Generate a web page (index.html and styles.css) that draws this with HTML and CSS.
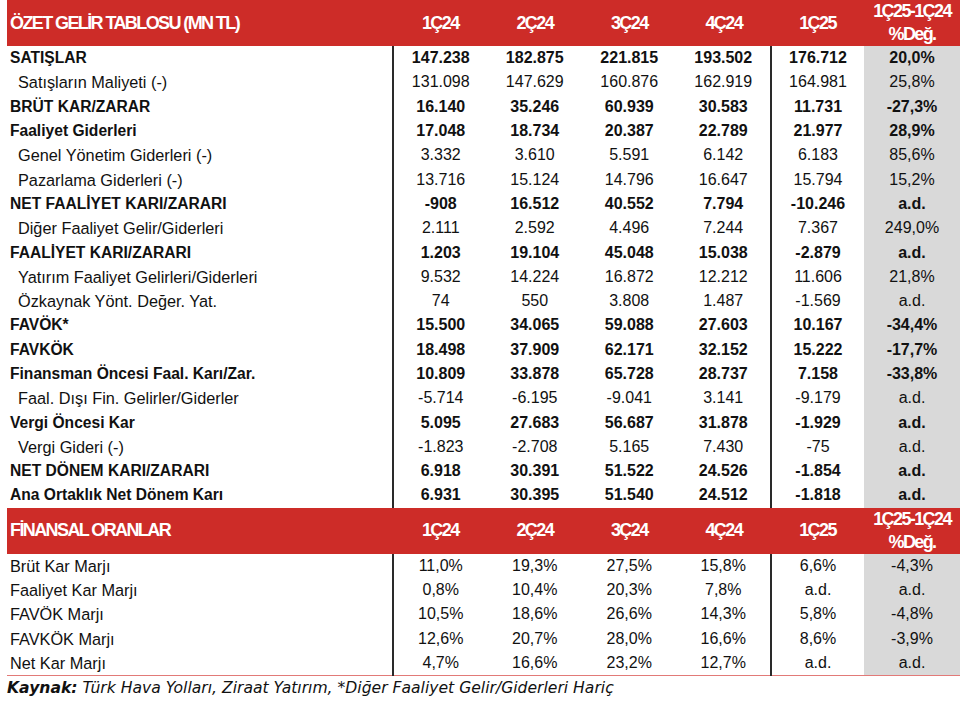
FILE: index.html
```html
<!DOCTYPE html>
<html lang="tr">
<head>
<meta charset="utf-8">
<title>Özet Gelir Tablosu</title>
<link rel="stylesheet" href="styles.css">
</head>
<body>
<div class="page">
<table class="fin">
<colgroup>
<col class="c-label"><col class="c-q"><col class="c-q"><col class="c-q"><col class="c-q"><col class="c-q5"><col class="c-chg">
</colgroup>
<tbody>
<tr class="head">
<th class="lbl">ÖZET GELİR TABLOSU (MN TL)</th><th>1Ç24</th><th>2Ç24</th><th>3Ç24</th><th>4Ç24</th><th>1Ç25</th><th class="two">1Ç25-1Ç24<br>%Değ.</th>
</tr>
<tr class="b"><td class="lbl">SATIŞLAR</td><td class="q1">147.238</td><td>182.875</td><td>221.815</td><td>193.502</td><td class="q5">176.712</td><td class="chg">20,0%</td></tr>
<tr><td class="lbl ind">Satışların Maliyeti (-)</td><td class="q1">131.098</td><td>147.629</td><td>160.876</td><td>162.919</td><td class="q5">164.981</td><td class="chg">25,8%</td></tr>
<tr class="b"><td class="lbl">BRÜT KAR/ZARAR</td><td class="q1">16.140</td><td>35.246</td><td>60.939</td><td>30.583</td><td class="q5">11.731</td><td class="chg">-27,3%</td></tr>
<tr class="b"><td class="lbl">Faaliyet Giderleri</td><td class="q1">17.048</td><td>18.734</td><td>20.387</td><td>22.789</td><td class="q5">21.977</td><td class="chg">28,9%</td></tr>
<tr><td class="lbl ind">Genel Yönetim Giderleri (-)</td><td class="q1">3.332</td><td>3.610</td><td>5.591</td><td>6.142</td><td class="q5">6.183</td><td class="chg">85,6%</td></tr>
<tr><td class="lbl ind">Pazarlama Giderleri (-)</td><td class="q1">13.716</td><td>15.124</td><td>14.796</td><td>16.647</td><td class="q5">15.794</td><td class="chg">15,2%</td></tr>
<tr class="b"><td class="lbl">NET FAALİYET KARI/ZARARI</td><td class="q1">-908</td><td>16.512</td><td>40.552</td><td>7.794</td><td class="q5">-10.246</td><td class="chg">a.d.</td></tr>
<tr><td class="lbl ind">Diğer Faaliyet Gelir/Giderleri</td><td class="q1">2.111</td><td>2.592</td><td>4.496</td><td>7.244</td><td class="q5">7.367</td><td class="chg">249,0%</td></tr>
<tr class="b"><td class="lbl">FAALİYET KARI/ZARARI</td><td class="q1">1.203</td><td>19.104</td><td>45.048</td><td>15.038</td><td class="q5">-2.879</td><td class="chg">a.d.</td></tr>
<tr><td class="lbl ind">Yatırım Faaliyet Gelirleri/Giderleri</td><td class="q1">9.532</td><td>14.224</td><td>16.872</td><td>12.212</td><td class="q5">11.606</td><td class="chg">21,8%</td></tr>
<tr><td class="lbl ind">Özkaynak Yönt. Değer. Yat.</td><td class="q1">74</td><td>550</td><td>3.808</td><td>1.487</td><td class="q5">-1.569</td><td class="chg">a.d.</td></tr>
<tr class="b"><td class="lbl">FAVÖK*</td><td class="q1">15.500</td><td>34.065</td><td>59.088</td><td>27.603</td><td class="q5">10.167</td><td class="chg">-34,4%</td></tr>
<tr class="b"><td class="lbl">FAVKÖK</td><td class="q1">18.498</td><td>37.909</td><td>62.171</td><td>32.152</td><td class="q5">15.222</td><td class="chg">-17,7%</td></tr>
<tr class="b"><td class="lbl">Finansman Öncesi Faal. Karı/Zar.</td><td class="q1">10.809</td><td>33.878</td><td>65.728</td><td>28.737</td><td class="q5">7.158</td><td class="chg">-33,8%</td></tr>
<tr><td class="lbl ind">Faal. Dışı Fin. Gelirler/Giderler</td><td class="q1">-5.714</td><td>-6.195</td><td>-9.041</td><td>3.141</td><td class="q5">-9.179</td><td class="chg">a.d.</td></tr>
<tr class="b"><td class="lbl">Vergi Öncesi Kar</td><td class="q1">5.095</td><td>27.683</td><td>56.687</td><td>31.878</td><td class="q5">-1.929</td><td class="chg">a.d.</td></tr>
<tr><td class="lbl ind">Vergi Gideri (-)</td><td class="q1">-1.823</td><td>-2.708</td><td>5.165</td><td>7.430</td><td class="q5">-75</td><td class="chg">a.d.</td></tr>
<tr class="b"><td class="lbl">NET DÖNEM KARI/ZARARI</td><td class="q1">6.918</td><td>30.391</td><td>51.522</td><td>24.526</td><td class="q5">-1.854</td><td class="chg">a.d.</td></tr>
<tr class="b"><td class="lbl">Ana Ortaklık Net Dönem Karı</td><td class="q1">6.931</td><td>30.395</td><td>51.540</td><td>24.512</td><td class="q5">-1.818</td><td class="chg">a.d.</td></tr>
<tr class="head head2">
<th class="lbl">FİNANSAL ORANLAR</th><th>1Ç24</th><th>2Ç24</th><th>3Ç24</th><th>4Ç24</th><th>1Ç25</th><th class="two">1Ç25-1Ç24<br>%Değ.</th>
</tr>
<tr><td class="lbl">Brüt Kar Marjı</td><td class="q1">11,0%</td><td>19,3%</td><td>27,5%</td><td>15,8%</td><td class="q5">6,6%</td><td class="chg">-4,3%</td></tr>
<tr><td class="lbl">Faaliyet Kar Marjı</td><td class="q1">0,8%</td><td>10,4%</td><td>20,3%</td><td>7,8%</td><td class="q5">a.d.</td><td class="chg">a.d.</td></tr>
<tr><td class="lbl">FAVÖK Marjı</td><td class="q1">10,5%</td><td>18,6%</td><td>26,6%</td><td>14,3%</td><td class="q5">5,8%</td><td class="chg">-4,8%</td></tr>
<tr><td class="lbl">FAVKÖK Marjı</td><td class="q1">12,6%</td><td>20,7%</td><td>28,0%</td><td>16,6%</td><td class="q5">8,6%</td><td class="chg">-3,9%</td></tr>
<tr class="last"><td class="lbl">Net Kar Marjı</td><td class="q1">4,7%</td><td>16,6%</td><td>23,2%</td><td>12,7%</td><td class="q5">a.d.</td><td class="chg">a.d.</td></tr>
</tbody>
</table>
<p class="source"><b>Kaynak:</b> Türk Hava Yolları, Ziraat Yatırım, *Diğer Faaliyet Gelir/Giderleri Hariç</p>
</div>
</body>
</html>
```
FILE: styles.css
```css
html, body {
  margin: 0;
  padding: 0;
  background: #ffffff;
}

.page {
  padding-left: 7px;
  width: 953px;
}

.fin {
  width: 953px;
  table-layout: fixed;
  border-collapse: collapse;
  font-family: "Liberation Sans", Arial, sans-serif;
  color: #111111;
}

.c-label { width: 386px; }
.c-q { width: 94.5px; }
.c-q5 { width: 93px; }
.c-chg { width: 96px; }

.fin td, .fin th {
  padding: 0;
  text-align: center;
  white-space: nowrap;
  overflow: hidden;
}

.fin td {
  height: 24.3px;
  font-size: 16px;
  line-height: 18px;
}

.fin td.lbl {
  text-align: left;
  padding-left: 3px;
  font-size: 16.3px;
}

.fin td.ind {
  padding-left: 11px;
}

.fin tr.b td {
  font-weight: bold;
}

.fin tr.b td.lbl {
  font-size: 15.6px;
}

.fin td.q1 {
  border-left: 2px solid #2a2a2a;
}

.fin td.q5 {
  border-left: 2px solid #2a2a2a;
}

.fin td.chg {
  background: #d9d9d9;
}

.fin tr.head th {
  background: #cd2c28;
  color: #ffffff;
  height: 44px;
  font-size: 18px;
  line-height: 23px;
  font-weight: bold;
  letter-spacing: -1.6px;
}

.fin tr.head2 th {
  height: 45px;
}

.fin tr.head th.lbl {
  text-align: left;
  padding-left: 3px;
}

.fin tr.last td {
  border-bottom: 1px solid #e27a78;
}

.source {
  margin: 2px 0 0 0;
  font-family: "DejaVu Sans", Verdana, sans-serif;
  font-style: italic;
  font-size: 15.6px;
  line-height: 20px;
  color: #111111;
}

.source b {
  font-weight: bold;
}
```
